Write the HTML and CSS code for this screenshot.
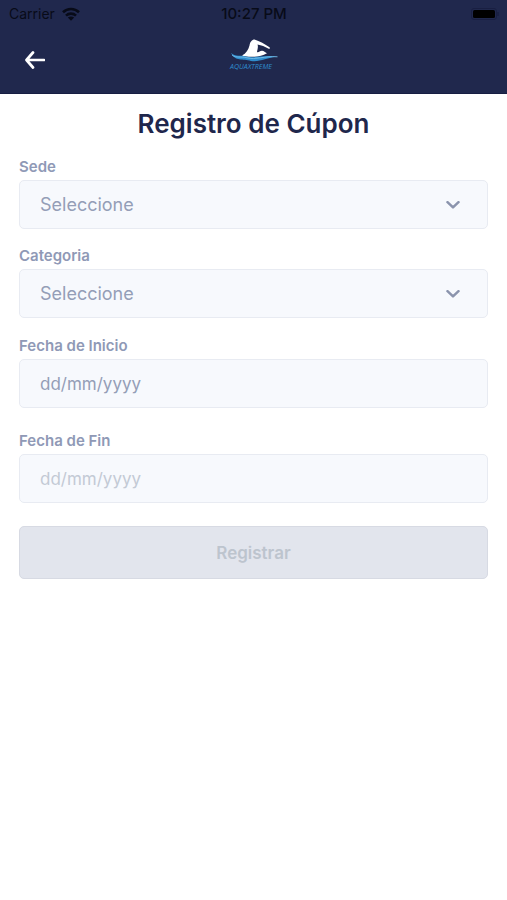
FILE: index.html
```html
<!DOCTYPE html>
<html lang="es">
<head>
<meta charset="utf-8">
<meta name="viewport" content="width=device-width, initial-scale=1">
<title>Registro de Cúpon</title>
<link rel="stylesheet" href="styles.css">
</head>
<body>
<header class="header">
  <div class="status">
    <div class="status-left">
      <span>Carrier</span>
      <svg class="wifi" viewBox="0 0 18 14" aria-hidden="true">
        <g fill="none" stroke="currentColor" stroke-width="2.6">
          <path d="M1 5.2C5.5.9 12.500.9 17 5.200"/>
          <path d="M4 8.600C6.800 5.900 11.200 5.900 14 8.600"/>
        </g>
        <path d="M9 13.800 5.800 10.600C7.600 9.100 10.400 9.100 12.200 10.600Z" fill="currentColor"/>
      </svg>
    </div>
    <span class="status-time">10:27 PM</span>
    <svg class="battery" viewBox="0 0 28 12" aria-hidden="true">
      <rect x="0.500" y="0.500" width="25" height="11" rx="2.500" fill="none" stroke="#191f42"/>
      <rect x="2" y="2" width="22" height="8" rx="1.500" fill="#000"/>
      <path d="M27 4v4" stroke="#191f42" stroke-width="1.500"/>
    </svg>
  </div>
  <nav class="nav">
    <button class="back" type="button" aria-label="Volver">
      <svg viewBox="0 0 20 18" aria-hidden="true"><path d="M19 9H1.800M8 1.500 1.500 9 8 16.500" fill="none" stroke="currentColor" stroke-width="2.700" stroke-linecap="round" stroke-linejoin="round"/></svg>
    </button>
    <svg class="logo" viewBox="0 0 50 34" role="img" aria-label="Aquaxtreme">
      <path d="M13 17.500C17 15.500 19.500 11.500 20.500 7.500C21 4 23 1.500 25.500 1.500C30.500 3.200 36 6 40.500 9.300C41.500 10.400 40.500 11.400 39.200 10.500C36 8.600 32.500 7.200 28.500 6.500C29.500 9 28.300 11.500 28 14C29.500 15 30.500 13 33 12.800C35 12.800 36 14.300 38 15.300C34 17.500 30 18.600 25 18.800C20 19 16.500 18.800 13 17.500Z" fill="#fff"/>
      <path d="M2 14.800C6.500 19.500 11.500 16.800 17 18.600C26 21 34 16.500 48.800 18.800C37 19.500 31 24.500 22 23C14 20.500 6 24 2 14.800Z" fill="#2f8dce"/>
      <path d="M3 17C7.500 20.500 12 18 18 19.800C27 22 35 17.800 48.500 18.800" fill="none" stroke="#7fc4ec" stroke-width="0.800"/>
      <text class="logo-text" x="1" y="30.500">AQUAXTREME</text>
    </svg>
  </nav>
</header>
<main class="content">
  <h1 class="title">Registro de Cúpon</h1>
  <form class="form">
    <div class="selects">
      <div class="field">
        <label for="sede">Sede</label>
        <div class="select-wrap">
          <select id="sede" class="control"><option>Seleccione</option></select>
          <svg class="chevron" viewBox="0 0 14 8" aria-hidden="true"><path d="M1.500 1.200 7 6.400l5.500-5.200"/></svg>
        </div>
      </div>
      <div class="field">
        <label for="categoria">Categoria</label>
        <div class="select-wrap">
          <select id="categoria" class="control"><option>Seleccione</option></select>
          <svg class="chevron" viewBox="0 0 14 8" aria-hidden="true"><path d="M1.500 1.200 7 6.400l5.500-5.200"/></svg>
        </div>
      </div>
    </div>
    <div class="dates">
      <div class="field">
        <label for="inicio">Fecha de Inicio</label>
        <input id="inicio" class="control date" type="text" placeholder="dd/mm/yyyy">
      </div>
      <div class="field">
        <label for="fin">Fecha de Fin</label>
        <input id="fin" class="control date" type="text" placeholder="dd/mm/yyyy" disabled>
      </div>
      <button class="submit" type="submit" disabled>Registrar</button>
    </div>
  </form>
</main>
</body>
</html>
```
FILE: styles.css
```css
* {
  box-sizing: border-box;
}

body {
  margin: 0;
  background: #fff;
  color: #1f274c;
  font-family: Inter, "Liberation Sans", sans-serif;
}

.header {
  background: #20284d;
  border-bottom: 1px solid #171e42;
}

.status {
  display: grid;
  grid-template-columns: 1fr auto 1fr;
  align-items: center;
  height: 27px;
  padding: 0 8px 0 9px;
  color: #080b18;
  font-size: 14px;
}

.status-left {
  display: flex;
  align-items: center;
  gap: 7px;
}

.wifi {
  width: 18px;
  height: 14px;
}

.status-time {
  font-size: 15px;
  font-weight: 500;
}

.battery {
  justify-self: end;
  width: 28px;
  height: 12px;
}

.nav {
  display: grid;
  grid-template-columns: 1fr auto 1fr;
  align-items: center;
  height: 66px;
  padding: 0 15px;
}

.back {
  display: flex;
  align-items: center;
  justify-content: center;
  width: 40px;
  height: 40px;
  padding: 0;
  border: 0;
  background: none;
  color: #fff;
}

.back svg {
  width: 20px;
  height: 18px;
}

.logo {
  width: 50px;
  height: 34px;
  margin-bottom: 10px;
}

.logo-text {
  fill: #2f8dce;
  font-family: "Open Sans", sans-serif;
  font-size: 7px;
  font-style: italic;
  font-weight: 500;
}

.content {
  padding: 14px 19px;
}

.title {
  margin: 0 0 17px;
  font-size: 26px;
  font-weight: 600;
  line-height: 32px;
  text-align: center;
}

.form {
  display: grid;
  gap: 18px;
}

.selects {
  display: grid;
  gap: 17px;
}

.dates {
  display: grid;
  gap: 23px;
}

.field {
  display: grid;
  gap: 3px;
}

label {
  color: #8f99b6;
  font-size: 15px;
  font-weight: 600;
  line-height: 20px;
}

.control {
  width: 100%;
  height: 49px;
  margin: 0;
  padding: 0 20px;
  border: 1px solid #e8ebf2;
  border-radius: 5px;
  background: #f7f9fd;
  color: #949eb7;
  font-family: inherit;
  font-size: 18px;
  appearance: none;
  opacity: 1;
}

.date {
  font-size: 17px;
}

.control::placeholder {
  color: #949eb7;
  opacity: 1;
}

.control:disabled::placeholder {
  color: #c3cad5;
}

.select-wrap {
  display: grid;
  align-items: center;
}

.select-wrap > * {
  grid-area: 1 / 1;
}

.chevron {
  justify-self: end;
  width: 14px;
  height: 8px;
  margin-right: 28px;
  fill: none;
  stroke: #8b94ad;
  stroke-width: 2.5;
  stroke-linecap: round;
  stroke-linejoin: round;
  pointer-events: none;
}

.submit {
  height: 53px;
  border: 1px solid #d7dae3;
  border-radius: 5px;
  background: #e2e5ed;
  color: #bdc4ce;
  font-family: inherit;
  font-size: 17px;
  font-weight: 600;
}
```
